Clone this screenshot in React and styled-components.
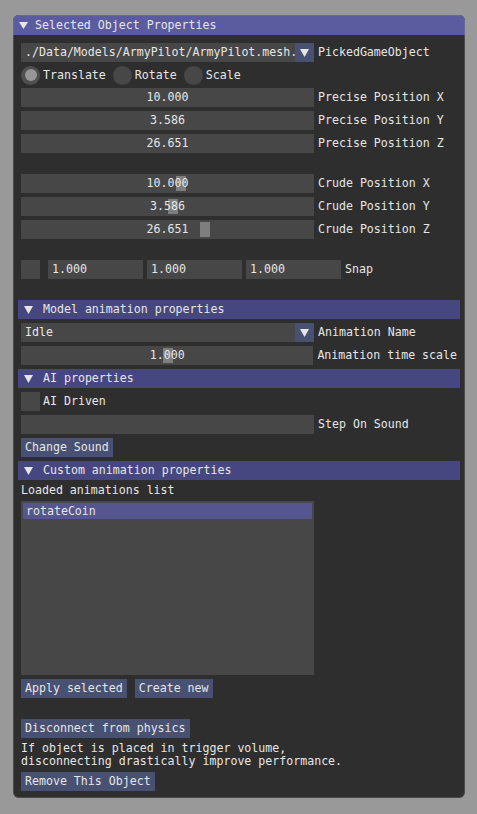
import React from 'react'
import styled, { createGlobalStyle } from 'styled-components'

const GlobalStyle = createGlobalStyle`
  html, body {
    margin: 0;
    padding: 0;
    background: #999999;
  }
  body {
    font-family: "DejaVu Sans Mono", "Liberation Mono", monospace;
    font-size: 11.6px;
    color: #e6e6e6;
  }
`

const Page = styled.div`
  padding: 15px 0 17px 13px;
`

const Window = styled.div`
  position: relative;
  width: 452px;
  background: #2e2e2e;
  border-radius: 6px;
  overflow: hidden;

  &::after {
    content: '';
    position: absolute;
    inset: 0;
    border: 1px solid rgba(128, 128, 128, 0.35);
    border-radius: 6px;
    pointer-events: none;
  }
`

const TitleBar = styled.div`
  height: 20px;
  display: flex;
  align-items: center;
  gap: 7px;
  padding-left: 6px;
  background: #5b5b9f;
  line-height: 13px;
  white-space: pre;
`

const Content = styled.div`
  display: flex;
  flex-direction: column;
  gap: 4px;
  padding: 8px 8px 7px;
`

const Row = styled.div`
  display: flex;
  align-items: center;
  gap: ${p => p.gap ?? 4}px;
  height: ${p => p.h ?? 19}px;
  line-height: 13px;
  white-space: pre;
`

const Label = styled.span`
  white-space: pre;
`

const Frame = styled.div`
  position: relative;
  box-sizing: border-box;
  width: ${p => p.w ?? 293}px;
  height: 19px;
  padding: 0 4px;
  background: #474747;
  display: flex;
  align-items: center;
  justify-content: ${p => (p.center ? 'center' : 'flex-start')};
  line-height: 13px;
  white-space: pre;
  overflow: hidden;

  span {
    position: relative;
  }
`

const Grab = styled.div`
  position: absolute;
  top: 2px;
  bottom: 2px;
  width: 10px;
  background: #7e7e7e;
`

const ComboBox = styled.div`
  display: flex;
  width: 293px;
  height: 19px;
`

const ComboText = styled.div`
  flex: 1;
  min-width: 0;
  padding-left: 4px;
  background: #474747;
  display: flex;
  align-items: center;
  line-height: 13px;
  white-space: pre;
  overflow: hidden;
`

const ArrowBox = styled.div`
  width: 19px;
  height: 19px;
  background: #495172;
  display: flex;
  align-items: center;
  justify-content: center;
`

const Header = styled.div`
  margin: 0 -3px;
  height: 19px;
  display: flex;
  align-items: center;
  gap: 10px;
  padding-left: 6px;
  background: #464680;
  line-height: 13px;
  white-space: pre;
`

const Button = styled.div`
  height: 19px;
  padding: 0 4px;
  background: #495172;
  display: flex;
  align-items: center;
  line-height: 13px;
  white-space: pre;
`

const Check = styled.div`
  width: 19px;
  height: 19px;
  flex: none;
  background: #474747;
`

const RadioItem = styled.div`
  display: flex;
  align-items: center;
  gap: 3px;
`

const RadioCircle = styled.div`
  width: 19px;
  height: 19px;
  border-radius: 50%;
  background: ${p => (p.on ? '#4f4f4f' : '#474747')};
  display: flex;
  align-items: center;
  justify-content: center;

  &::before {
    content: '';
    display: ${p => (p.on ? 'block' : 'none')};
    width: 12px;
    height: 12px;
    border-radius: 50%;
    background: #969696;
  }
`

const Spacer = styled.div`
  height: 13px;
`

const TextLine = styled.div`
  line-height: 13px;
  white-space: pre;
`

const ListBox = styled.div`
  box-sizing: border-box;
  width: 293px;
  height: 174px;
  padding: 2px;
  background: #474747;
`

const ListItem = styled.div`
  height: 16px;
  padding-left: 3px;
  line-height: 16px;
  background: ${p => (p.selected ? '#55558f' : 'transparent')};
  white-space: pre;
`

const Arrow = ({ w = 9, h = 8 }) => (
  <svg width={w} height={h} viewBox="0 0 9 8" preserveAspectRatio="none">
    <polygon points="0,0 9,0 4.5,8" fill="#e6e6e6" />
  </svg>
)

const Combo = ({ value, label }) => (
  <Row>
    <ComboBox>
      <ComboText>{value}</ComboText>
      <ArrowBox>
        <Arrow />
      </ArrowBox>
    </ComboBox>
    <Label>{label}</Label>
  </Row>
)

const Drag = ({ value, label }) => (
  <Row>
    <Frame center>
      <span>{value}</span>
    </Frame>
    <Label>{label}</Label>
  </Row>
)

const Slider = ({ value, t, label }) => (
  <Row>
    <Frame center>
      <Grab style={{ left: 2 + Math.round(t * 279) }} />
      <span>{value}</span>
    </Frame>
    <Label>{label}</Label>
  </Row>
)

const precise = [
  ['10.000', 'Precise Position X'],
  ['3.586', 'Precise Position Y'],
  ['26.651', 'Precise Position Z'],
]

const crude = [
  ['10.000', 0.548, 'Crude Position X'],
  ['3.586', 0.52, 'Crude Position Y'],
  ['26.651', 0.634, 'Crude Position Z'],
]

export default function App() {
  return (
    <Page>
      <GlobalStyle />
      <Window>
        <TitleBar>
          <Arrow w={9} h={7} />
          <span>Selected Object Properties</span>
        </TitleBar>
        <Content>
          <Combo value="./Data/Models/ArmyPilot/ArmyPilot.mesh.dae" label="PickedGameObject" />
          <Row h={18} gap={7}>
            <RadioItem>
              <RadioCircle on />
              <Label>Translate</Label>
            </RadioItem>
            <RadioItem>
              <RadioCircle />
              <Label>Rotate</Label>
            </RadioItem>
            <RadioItem>
              <RadioCircle />
              <Label>Scale</Label>
            </RadioItem>
          </Row>
          {precise.map(([v, l]) => (
            <Drag key={l} value={v} label={l} />
          ))}
          <Spacer />
          {crude.map(([v, t, l]) => (
            <Slider key={l} value={v} t={t} label={l} />
          ))}
          <Spacer />
          <Row gap={8}>
            <Check />
            <Row>
              <Frame w={95}>1.000</Frame>
              <Frame w={95}>1.000</Frame>
              <Frame w={95}>1.000</Frame>
              <Label>Snap</Label>
            </Row>
          </Row>
          <Spacer />
          <Header>
            <Arrow />
            <span>Model animation properties</span>
          </Header>
          <Combo value="Idle" label="Animation Name" />
          <Slider value="1.000" t={0.5} label="Animation time scale" />
          <Header>
            <Arrow />
            <span>AI properties</span>
          </Header>
          <Row gap={3}>
            <Check />
            <Label>AI Driven</Label>
          </Row>
          <Drag value="" label="Step On Sound" />
          <Row>
            <Button>Change Sound</Button>
          </Row>
          <Header>
            <Arrow />
            <span>Custom animation properties</span>
          </Header>
          <TextLine>Loaded animations list</TextLine>
          <ListBox>
            <ListItem selected>rotateCoin</ListItem>
          </ListBox>
          <Row gap={8}>
            <Button>Apply selected</Button>
            <Button>Create new</Button>
          </Row>
          <Spacer />
          <Row>
            <Button>Disconnect from physics</Button>
          </Row>
          <div>
            <TextLine>If object is placed in trigger volume,</TextLine>
            <TextLine>disconnecting drastically improve performance.</TextLine>
          </div>
          <Row>
            <Button>Remove This Object</Button>
          </Row>
        </Content>
      </Window>
    </Page>
  )
}
